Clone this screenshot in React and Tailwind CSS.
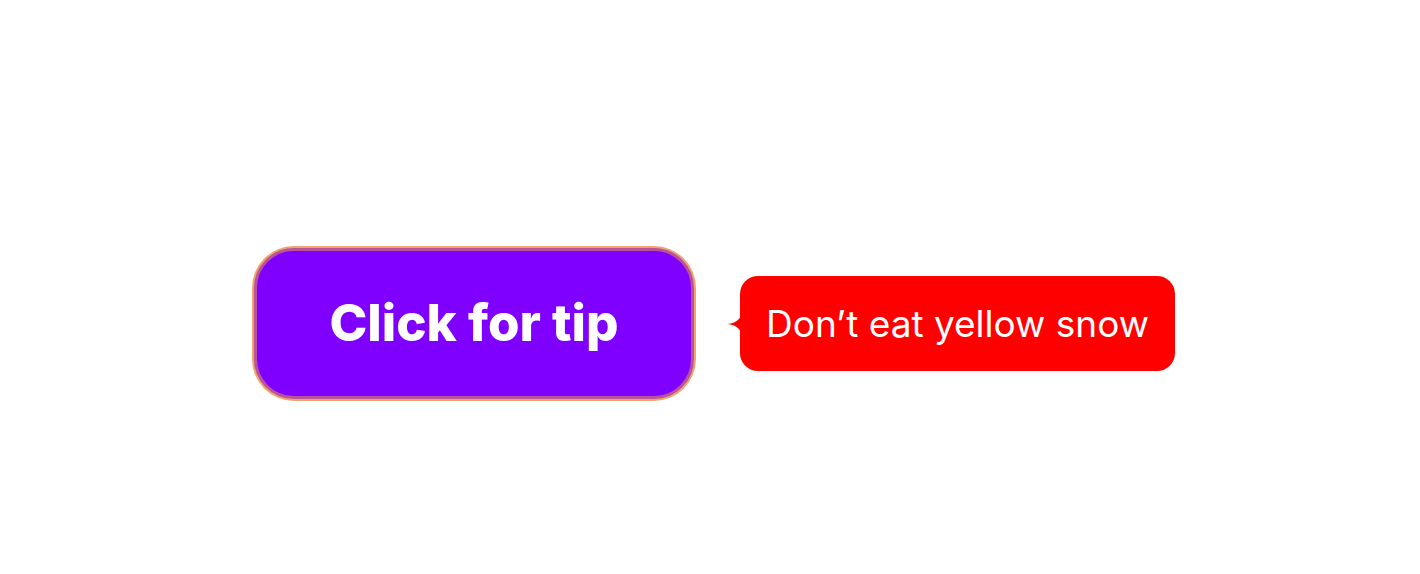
import { useState } from "react";

function Tip({ text }) {
  return (
    <div className="flex items-center">
      {/* concave arrow */}
      <svg width="14" height="20" viewBox="0 0 14 20" className="-mr-px shrink-0">
        <path d="M14 0 C14 6 6 10 0 10 C6 10 14 14 14 20 Z" fill="#ff0000" />
      </svg>
      <div className="h-[95px] w-[435px] rounded-[18px] bg-[#ff0000] flex items-center justify-center text-white text-[37px] leading-none">
        <span>{text}</span>
      </div>
    </div>
  );
}

export default function App() {
  const [open, setOpen] = useState(true);

  return (
    <div className="h-[574px] w-full bg-white flex items-center justify-center pt-[73px] pl-[9px] font-[Inter,'Liberation_Sans',sans-serif]">
      <div className="flex items-center gap-[33px]">
        <button
          type="button"
          onClick={() => setOpen(!open)}
          className="h-[151px] w-[440px] rounded-[40px] bg-[#8000ff] border-[3px] border-[#b9539a] shadow-[0_0_0_2px_#f2a46e] flex items-center justify-center text-white text-[51px] font-extrabold"
        >
          Click for tip
        </button>
        {open && <Tip text="Don’t eat yellow snow" />}
      </div>
    </div>
  );
}
